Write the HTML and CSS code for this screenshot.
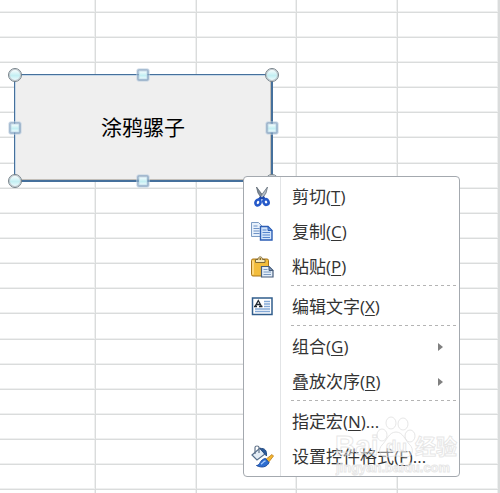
FILE: index.html
```html
<!DOCTYPE html>
<html lang="zh-CN">
<head>
<meta charset="utf-8">
<title>工作表</title>
<link rel="stylesheet" href="styles.css">
</head>
<body>
<main class="workspace">
  <table class="sheet">
    <colgroup><col class="col-first"><col class="col-wide"><col class="col"><col class="col-wide"><col class="col-wide"><col></colgroup>
    <tbody>
      <tr><td></td><td></td><td></td><td></td><td></td><td></td></tr>
      <tr><td></td><td></td><td></td><td></td><td></td><td></td></tr>
      <tr><td></td><td></td><td></td><td></td><td></td><td></td></tr>
      <tr><td></td><td></td><td></td><td></td><td></td><td></td></tr>
      <tr><td></td><td></td><td></td><td></td><td></td><td></td></tr>
      <tr><td></td><td></td><td></td><td></td><td></td><td></td></tr>
      <tr><td></td><td></td><td></td><td></td><td></td><td></td></tr>
      <tr><td></td><td></td><td></td><td></td><td></td><td></td></tr>
      <tr><td></td><td></td><td></td><td></td><td></td><td></td></tr>
      <tr><td></td><td></td><td></td><td></td><td></td><td></td></tr>
      <tr><td></td><td></td><td></td><td></td><td></td><td></td></tr>
      <tr><td></td><td></td><td></td><td></td><td></td><td></td></tr>
      <tr><td></td><td></td><td></td><td></td><td></td><td></td></tr>
      <tr><td></td><td></td><td></td><td></td><td></td><td></td></tr>
      <tr><td></td><td></td><td></td><td></td><td></td><td></td></tr>
      <tr><td></td><td></td><td></td><td></td><td></td><td></td></tr>
      <tr><td></td><td></td><td></td><td></td><td></td><td></td></tr>
      <tr><td></td><td></td><td></td><td></td><td></td><td></td></tr>
      <tr><td></td><td></td><td></td><td></td><td></td><td></td></tr>
      <tr><td></td><td></td><td></td><td></td><td></td><td></td></tr>
      <tr><td></td><td></td><td></td><td></td><td></td><td></td></tr>
    </tbody>
  </table>

  <div class="shape">
    <button class="shape-button" type="button">涂鸦骡子</button>
    <span class="handle corner top left"></span>
    <span class="handle edge top middle"></span>
    <span class="handle corner top right"></span>
    <span class="handle edge center left"></span>
    <span class="handle edge center right"></span>
    <span class="handle corner bottom left"></span>
    <span class="handle edge bottom middle"></span>
    <span class="handle corner bottom right"></span>
  </div>

  <div class="menu" role="menu">
    <button class="item" type="button" role="menuitem">
      <svg class="icon" viewBox="0 0 24 24" aria-hidden="true">
        <path d="M6.500 2l1.500 6 4 6 2-2z" fill="#7f8b99" stroke="#59646f" stroke-width=".8"/>
        <path d="M17.500 2l-1.500 6-4 6-2-2z" fill="#b4bdc7" stroke="#66717c" stroke-width=".8"/>
        <path d="M11.500 12l-3 3.500M12.500 12l3 3.500" stroke="#1c46a8" stroke-width="3"/>
        <ellipse cx="8" cy="17.500" rx="2.500" ry="3" fill="#fff" stroke="#2559c9" stroke-width="2.600" transform="rotate(25 8 17.500)"/>
        <ellipse cx="16" cy="17" rx="2.500" ry="2.800" fill="#fff" stroke="#2559c9" stroke-width="2.600" transform="rotate(-25 16 17)"/>
      </svg>
      <span>剪切(<u>T</u>)</span>
    </button>
    <button class="item" type="button" role="menuitem">
      <svg class="icon" viewBox="0 0 24 24" aria-hidden="true">
        <path d="M1.500 2.500h7l3.500 3.500v10.500H1.500z" fill="#e6f0fb" stroke="#7c9cc4"/>
        <path d="M3.500 6h4M3.500 8.500h6M3.500 11h6M3.500 13.500h6" stroke="#6f93c6"/>
        <path d="M10.500 6.500h7.500l4 4v9.500H10.500z" fill="#d3e5fb" stroke="#2c5eb5" stroke-width="1.400"/>
        <path d="M18 6.500v4h4z" fill="#6c9ae0" stroke="#2c5eb5"/>
        <path d="M12.500 10h4M12.500 12.500h7.500M12.500 15h7.500M12.500 17.500h7.500" stroke="#5585ce"/>
      </svg>
      <span>复制(<u>C</u>)</span>
    </button>
    <button class="item" type="button" role="menuitem">
      <svg class="icon" viewBox="0 0 24 24" aria-hidden="true">
        <rect x="1.500" y="4" width="17" height="17" rx="1.500" fill="#f3bd3c" stroke="#a87419"/>
        <path d="M3 5.500v14" stroke="#ffe193" stroke-width="1.500"/>
        <path d="M5.500 7.500V4.500H8C8 1 12.500 1 12.500 4.500H15V7.500z" fill="#f5e8ba" stroke="#806a35"/>
        <circle cx="10.300" cy="4" r="1" fill="#886519"/>
        <path d="M11.500 11.500h7.500l4 4v6.500H11.500z" fill="#e3edf8" stroke="#465d7c" stroke-width="1.200"/>
        <path d="M19 11.500v4h4z" fill="#8299b8" stroke="#465d7c"/>
        <path d="M13.500 14.500h4M13.500 17h7.500M13.500 19.500h7.500" stroke="#7b9ac2"/>
      </svg>
      <span>粘贴(<u>P</u>)</span>
    </button>
    <hr class="separator">
    <button class="item" type="button" role="menuitem">
      <svg class="icon" viewBox="0 0 24 24" aria-hidden="true">
        <rect x="2.500" y="3" width="19.500" height="16.500" fill="#fff" stroke="#315d8c" stroke-width="1.500"/>
        <path d="M14 6.500h6M14 9h6M14 11.500h6M5 14h15M5 16.500h15" stroke="#84a9d6" stroke-width="1.300"/>
        <path d="M4 11.500h3M9 11.500h3.500M5.300 11l3-5.500 3 5.500M6.500 9.500h4" fill="none" stroke="#202830" stroke-width="1.300"/>
      </svg>
      <span>编辑文字(<u>X</u>)</span>
    </button>
    <hr class="separator">
    <button class="item" type="button" role="menuitem" aria-haspopup="true">
      <span class="icon"></span>
      <span>组合(<u>G</u>)</span>
      <svg class="arrow" viewBox="0 0 6 10" aria-hidden="true"><path d="M0 1l5 4-5 4z" fill="#808080"/></svg>
    </button>
    <button class="item" type="button" role="menuitem" aria-haspopup="true">
      <span class="icon"></span>
      <span>叠放次序(<u>R</u>)</span>
      <svg class="arrow" viewBox="0 0 6 10" aria-hidden="true"><path d="M0 1l5 4-5 4z" fill="#808080"/></svg>
    </button>
    <hr class="separator">
    <button class="item" type="button" role="menuitem">
      <span class="icon"></span>
      <span>指定宏(<u>N</u>)...</span>
    </button>
    <button class="item" type="button" role="menuitem">
      <svg class="icon" viewBox="0 0 24 24" aria-hidden="true">
        <path d="M2 10l8-7 5 6-8 6z" fill="#e4edf5" stroke="#566f8c" stroke-width="1.200"/>
        <path d="M5 9V2.500c0-2 4-2 4 0V8" fill="none" stroke="#62748a" stroke-width="1.200"/>
        <path d="M10 3.500c5-.5 7 2 6.500 7.500l-3-3.500z" fill="#2e5c9b" stroke="#284f86"/>
        <path d="M23.500 11l-5.500 7-3-3 7-5.500z" fill="#f6b72f" stroke="#b97b19" stroke-width=".8"/>
        <path d="M15.500 13.500l3.500 4c-2 5-8 5.500-12.500 3 4 0 3-6 9-7z" fill="#2e6ed0" stroke="#1f4da0"/>
        <path d="M11 19c2-.5 2-3 4.500-3" fill="none" stroke="#a7cafa" stroke-width="1.300"/>
      </svg>
      <span>设置控件格式(<u>F</u>)...</span>
    </button>

    <svg class="watermark" viewBox="0 0 124 60" aria-hidden="true">
      <g class="mark">
        <ellipse cx="47" cy="19" rx="5" ry="6"/>
        <ellipse cx="56" cy="7" rx="5" ry="6"/>
        <ellipse cx="68" cy="8" rx="5" ry="6"/>
        <ellipse cx="75" cy="20" rx="5" ry="6"/>
        <path d="M61 16c7 0 9 8 14 13 4 4 3 12-4 12-4 0-6-1-10-1s-6 1-10 1c-7 0-8-8-4-12 5-5 7-13 14-13z"/>
        <text class="latin" x="0" y="39">Bai</text>
        <text class="du" x="51" y="36">du</text>
        <text class="han" x="80" y="38">经验</text>
        <text class="site" x="1" y="56">jingyan.baidu.com</text>
      </g>
    </svg>
  </div>
</main>
</body>
</html>
```
FILE: styles.css
```css
* {
  box-sizing: border-box;
}

body {
  margin: 0;
  background: #fff;
  color: #333;
  font-family: "Open Sans", "Noto Sans CJK SC", sans-serif;
}

.workspace {
  position: relative;
  height: 100vh;
  overflow: hidden;
}

/* worksheet grid */
.sheet {
  width: 100%;
  table-layout: fixed;
  border-collapse: separate;
  border-spacing: 0;
}

.col-first { width: 96px; }
.col { width: 100px; }
.col-wide { width: 101px; }

.sheet td {
  height: 25px;
  padding: 0;
  border: solid #dadcdc;
  border-width: 0 1px 1px 0;
  box-shadow: inset -1px -1px #eff0f0;
}

.sheet tr:first-child td { height: 13px; }
.sheet tr:nth-child(7n) td { height: 26px; }

/* selected form control */
.shape {
  position: absolute;
  left: 14px;
  top: 74px;
  width: 259px;
  height: 108px;
}

.shape-button {
  display: block;
  width: 100%;
  height: 100%;
  padding: 0 0 4px;
  border: solid #45709c;
  border-width: 1px 2px 2px 1px;
  background: #efefef;
  box-shadow: inset 1px 1px #c7d8e8, inset -1px -1px #c2beb8;
  color: #000;
  font: 21px/30px "Noto Sans CJK SC", sans-serif;
}

.handle {
  position: absolute;
  width: 11px;
  height: 11px;
  transform: translate(-50%, -50%);
  background: linear-gradient(#fff, #c3eff3 55%, #f4fdff);
}

.corner {
  width: 14px;
  height: 14px;
  border: 1px solid #76828a;
  border-radius: 50%;
  box-shadow: inset 0 0 0 1px #c3cbd0;
}

.edge {
  border: 1px solid #6d90b4;
  border-radius: 1px;
  box-shadow: 0 0 0 1px #c3d3e2, inset 0 0 0 1px #c0d9e8;
}

.top { top: 1px; }
.center { top: 54px; }
.bottom { top: 107px; }
.left { left: 1px; }
.middle { left: 129px; }
.right { left: 258px; }

/* context menu */
.menu {
  position: absolute;
  left: 243px;
  top: 176px;
  width: 217px;
  padding: 2px 3px 2px 0;
  border: 1px solid #a4a9af;
  border-radius: 4px;
  background: linear-gradient(to right, #fff 36px, #e2e4e6 36px, #e2e4e6 37px, #fff 37px);
}

.item {
  display: flex;
  align-items: center;
  width: 100%;
  height: 35px;
  padding: 0 12px 0 6px;
  border: 0;
  background: none;
  color: #333;
  font: inherit;
  font-size: 17px;
  line-height: 24px;
  text-align: left;
  white-space: nowrap;
}

.item u {
  text-decoration-thickness: 1px;
  text-underline-offset: 2px;
}

.icon {
  flex: none;
  width: 24px;
  height: 24px;
  margin-right: 18px;
}

.arrow {
  width: 6px;
  height: 10px;
  margin-left: auto;
}

.separator {
  height: 1px;
  margin: 1px 0 3px 47px;
  border: 0;
  background: repeating-linear-gradient(to right, #b4b4b4 0, #b4b4b4 3px, transparent 3px, transparent 6px);
}

.watermark {
  position: absolute;
  right: 0;
  bottom: 0;
  width: 124px;
  height: 60px;
  pointer-events: none;
}

.mark {
  fill: #fff;
  fill-opacity: .4;
  stroke: #dcdcdc;
  stroke-width: 1;
  stroke-opacity: .7;
  font-family: "Liberation Sans", "Noto Sans CJK SC", sans-serif;
  font-weight: bold;
}

.latin { font-size: 28px; }
.du { font-size: 17px; }
.han { font-size: 21px; }
.site { font-size: 13px; }
```
